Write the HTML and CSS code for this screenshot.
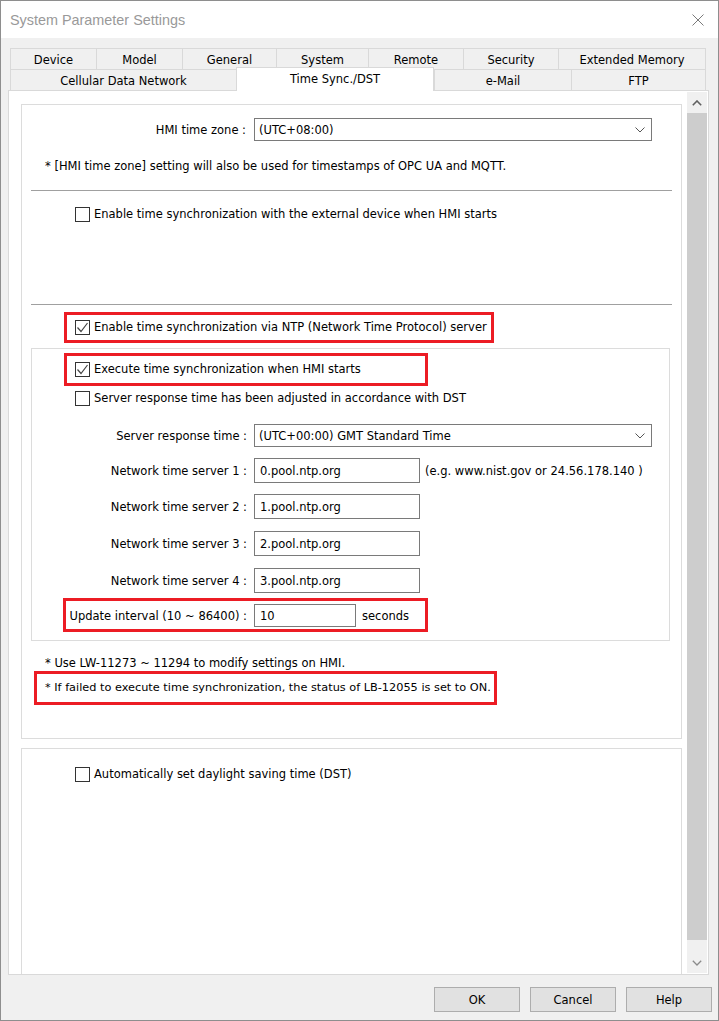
FILE: index.html
```html
<!DOCTYPE html>
<html>
<head>
<meta charset="utf-8">
<title>System Parameter Settings</title>
<link rel="stylesheet" href="styles.css">
</head>
<body>
<div class="window">
  <div class="titlebar">
    <span class="title">System Parameter Settings</span>
    <svg class="close" width="12" height="12" viewBox="0 0 12 12"><path d="M0.5 0.5 L11.5 11.5 M11.5 0.5 L0.5 11.5" stroke="#7a7a7a" stroke-width="1" fill="none"/></svg>
  </div>

  <div class="tabs">
    <div class="tabrow row1">
      <div class="tab">Device</div>
      <div class="tab">Model</div>
      <div class="tab">General</div>
      <div class="tab">System</div>
      <div class="tab">Remote</div>
      <div class="tab">Security</div>
      <div class="tab">Extended Memory</div>
    </div>
    <div class="tabrow row2">
      <div class="tab">Cellular Data Network</div>
      <div class="tab active">Time Sync./DST</div>
      <div class="tab">e-Mail</div>
      <div class="tab">FTP</div>
    </div>
  </div>

  <div class="panel">
    <div class="content">
      <div class="group g1">
        <div class="frow tz">
          <span class="lbl lbl-tz">HMI time zone :</span>
          <div class="select">
            <span>(UTC+08:00)</span>
            <svg class="chev" width="10" height="6" viewBox="0 0 10 6"><polyline points="0.5,0.5 5,5 9.5,0.5" fill="none" stroke="#555" stroke-width="1"/></svg>
          </div>
        </div>
        <p class="note">* [HMI time zone] setting will also be used for timestamps of OPC UA and MQTT.</p>
        <hr class="sep">
        <div class="check ext"><span class="box"></span><span>Enable time synchronization with the external device when HMI starts</span></div>
        <hr class="sep sep2">
        <div class="redbox rb1">
          <div class="check"><span class="box"><svg width="13" height="13" viewBox="0 0 13 13"><polyline points="1.5,6.5 5,10.5 11.5,2" fill="none" stroke="#444" stroke-width="1.2"/></svg></span><span>Enable time synchronization via NTP (Network Time Protocol) server</span></div>
        </div>

        <div class="subgroup">
          <div class="redbox rb2">
            <div class="check"><span class="box"><svg width="13" height="13" viewBox="0 0 13 13"><polyline points="1.5,6.5 5,10.5 11.5,2" fill="none" stroke="#444" stroke-width="1.2"/></svg></span><span>Execute time synchronization when HMI starts</span></div>
          </div>
          <div class="check srv"><span class="box"></span><span>Server response time has been adjusted in accordance with DST</span></div>

          <div class="frow srvrow">
            <span class="lbl lbl-sub">Server response time :</span>
            <div class="select">
              <span>(UTC+00:00) GMT Standard Time</span>
              <svg class="chev" width="10" height="6" viewBox="0 0 10 6"><polyline points="0.5,0.5 5,5 9.5,0.5" fill="none" stroke="#555" stroke-width="1"/></svg>
            </div>
          </div>
          <div class="frow nts nts1">
            <span class="lbl lbl-sub">Network time server 1 :</span>
            <div class="input">0.pool.ntp.org</div>
            <span class="hint">(e.g. www.nist.gov or 24.56.178.140 )</span>
          </div>
          <div class="frow nts nts2">
            <span class="lbl lbl-sub">Network time server 2 :</span>
            <div class="input">1.pool.ntp.org</div>
          </div>
          <div class="frow nts nts3">
            <span class="lbl lbl-sub">Network time server 3 :</span>
            <div class="input">2.pool.ntp.org</div>
          </div>
          <div class="frow nts nts4">
            <span class="lbl lbl-sub">Network time server 4 :</span>
            <div class="input">3.pool.ntp.org</div>
          </div>
          <div class="redbox rb3 frow">
            <span class="lbl lbl-upd">Update interval (10 ~ 86400) :</span>
            <div class="input small">10</div>
            <span class="unit">seconds</span>
          </div>
        </div>

        <p class="note note2">* Use LW-11273 ~ 11294 to modify settings on HMI.</p>
        <div class="redbox rb4">* If failed to execute time synchronization, the status of LB-12055 is set to ON.</div>
      </div>

      <div class="group g2">
        <div class="check dst"><span class="box"></span><span>Automatically set daylight saving time (DST)</span></div>
      </div>
    </div>

    <div class="scrollbar">
      <div class="sbtn up"><svg width="10" height="6" viewBox="0 0 10 6"><polyline points="0.8,5.2 5,1 9.2,5.2" fill="none" stroke="#606060" stroke-width="1.6"/></svg></div>
      <div class="thumb"></div>
      <div class="sbtn down"><svg width="10" height="6" viewBox="0 0 10 6"><polyline points="0.8,0.8 5,5 9.2,0.8" fill="none" stroke="#8a8a8a" stroke-width="1.3"/></svg></div>
    </div>
  </div>

  <div class="buttons">
    <div class="btn">OK</div>
    <div class="btn">Cancel</div>
    <div class="btn">Help</div>
  </div>
</div>
</body>
</html>
```

FILE: styles.css
```css
* { box-sizing: border-box; }
html, body { margin: 0; padding: 0; }
body {
  width: 719px;
  height: 1021px;
  overflow: hidden;
  background: #f0f0f0;
  font-family: "DejaVu Sans", Verdana, sans-serif;
  font-size: 11.5px;
  color: #000;
}

.window {
  width: 719px;
  height: 1021px;
  border: 1px solid #8e8e8e;
  background: #f0f0f0;
  display: flex;
  flex-direction: column;
}

/* title bar */
.titlebar {
  height: 37px;
  flex: none;
  background: #fff;
  display: flex;
  align-items: center;
  justify-content: space-between;
  padding: 0 14px 0 9px;
}
.title {
  font-family: "Liberation Sans", Arial, sans-serif;
  font-size: 14.4px;
  color: #999;
}
.close { display: block; }

/* tabs */
.tabs {
  flex: none;
  width: 696px;
  margin: 10px 0 0 9px;
}
.tabrow {
  display: grid;
  height: 21px;
}
.row1 { grid-template-columns: 86px 86px 94px 92px 95px 95px 148px; }
.row2 { grid-template-columns: 226px 198px 137px 135px; }
.tab {
  border-top: 1px solid #d9d9d9;
  border-left: 1px solid #d9d9d9;
  display: flex;
  align-items: center;
  justify-content: center;
  white-space: nowrap;
  line-height: 14px;
  padding-top: 1px;
}
.tab:last-child { border-right: 1px solid #d9d9d9; }
.tab.active {
  position: relative;
  z-index: 2;
  background: #fff;
  height: 24px;
  margin: -2px 0 -1px;
  border-right: 1px solid #d9d9d9;
  padding-top: 0;
  padding-bottom: 2px;
}

/* panel */
.panel {
  flex: none;
  margin-left: 7px;
  width: 701px;
  height: 885px;
  border: 1px solid #d9d9d9;
  background: #fff;
  display: flex;
  padding-right: 1px;
}
.content {
  flex: 1;
  overflow: hidden;
}
.scrollbar {
  width: 20px;
  flex: none;
  margin: 1px 0;
  background: #f0f0f0;
  display: flex;
  flex-direction: column;
}
.sbtn {
  height: 20px;
  flex: none;
  display: flex;
  align-items: center;
  justify-content: center;
}
.sbtn.up { padding-top: 2px; }
.thumb {
  height: 827px;
  margin-top: 1px;
  background: #cdcdcd;
  flex: none;
}
.sbtn.down { margin-top: auto; }

/* groups */
.group {
  margin-left: 12px;
  width: 661px;
  border: 1px solid #dcdcdc;
}
.g1 { margin-top: 13px; padding-bottom: 33px; }
.g2 { margin-top: 9px; height: 320px; }

.frow {
  display: flex;
  align-items: center;
}
.lbl {
  flex: none;
  text-align: right;
  white-space: nowrap;
  padding-top: 1px;
}
.lbl-tz { width: 224px; margin-right: 8px; }
.lbl-sub { width: 215px; margin-right: 7px; }
.lbl-upd { width: 181px; margin-right: 7px; }

.tz { margin-top: 13px; }

.select {
  width: 398px;
  height: 23px;
  flex: none;
  border: 1px solid #7a7a7a;
  background: #fff;
  display: flex;
  align-items: center;
  justify-content: space-between;
  padding: 0 6px 0 4px;
}
.chev { display: block; }

.input {
  width: 166px;
  height: 25px;
  flex: none;
  border: 1px solid #7a7a7a;
  background: #fff;
  display: flex;
  align-items: center;
  padding-left: 5px;
}
.input.small { width: 102px; height: 23px; }
.hint { margin-left: 5px; white-space: nowrap; }
.unit { margin-left: 6px; padding-top: 1px; }

.note {
  margin: 17px 0 0;
  padding-left: 23px;
  line-height: 16px;
}
.sep {
  margin: 16px 9px 0;
  border: 0;
  border-top: 1px solid #a0a0a0;
  height: 0;
}
.sep2 { margin-top: 82px; }

.check {
  display: flex;
  align-items: center;
  height: 15px;
  line-height: 15px;
  white-space: nowrap;
}
.box {
  width: 15px;
  height: 15px;
  flex: none;
  border: 1px solid #333;
  background: #fff;
  margin-right: 4px;
  display: flex;
  align-items: center;
  justify-content: center;
}
.box svg { display: block; }
.ext { margin-top: 16px; padding-left: 53px; }

.redbox {
  border: 3px solid #ec1c24;
}
.rb1 {
  margin: 7px 0 0 42px;
  width: 430px;
  padding: 5px 8px;
}

.subgroup {
  margin: 5px 0 0 9px;
  width: 639px;
  border: 1px solid #dcdcdc;
  padding-bottom: 8px;
}
.rb2 {
  margin: 4px 0 0 32px;
  width: 364px;
  padding: 6px 8px;
}
.srv { margin-top: 5px; padding-left: 43px; }
.srvrow { margin-top: 18px; }
.nts1 { margin-top: 11px; }
.nts2 { margin-top: 11px; }
.nts3 { margin-top: 12px; }
.nts4 { margin-top: 12px; }
.rb3 {
  margin: 5px 0 0 31px;
  width: 365px;
  padding: 3px 0 2px;
}

.note2 { margin-top: 14px; }
.rb4 {
  margin-left: 12px;
  width: 463px;
  padding: 6px 8px;
  line-height: 16px;
  font-size: 11.3px;
  white-space: nowrap;
}

.dst { margin-top: 18px; padding-left: 53px; }

/* buttons */
.buttons {
  flex: none;
  margin-top: 12px;
  display: flex;
  justify-content: flex-end;
  gap: 10px;
  padding-right: 6px;
}
.btn {
  width: 86px;
  height: 25px;
  background: #e1e1e1;
  border: 1px solid #adadad;
  display: flex;
  align-items: center;
  justify-content: center;
}
```
